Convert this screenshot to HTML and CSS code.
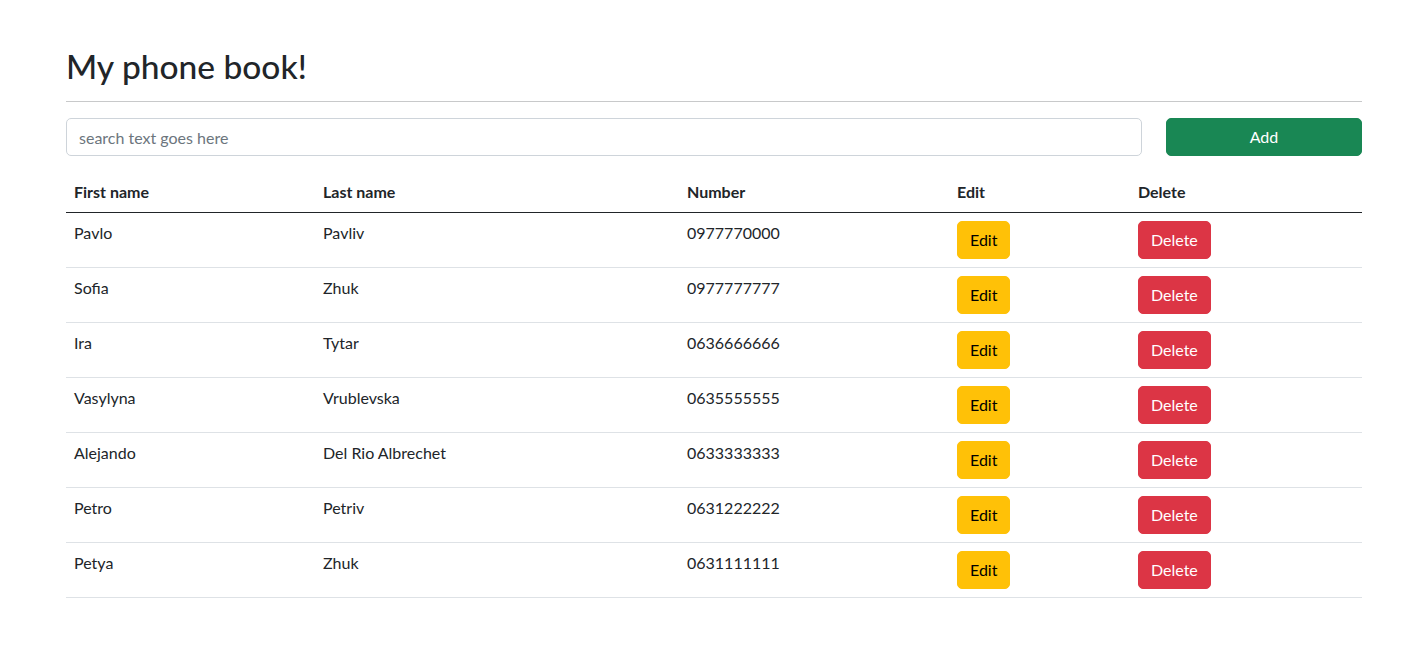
FILE: index.html
```html
<!DOCTYPE html>
<html lang="en">
<head>
<meta charset="utf-8">
<title>My phone book!</title>
<link rel="stylesheet" href="styles.css">
</head>
<body>
<div class="container">
  <h1 class="title">My phone book!</h1>
  <hr class="divider">
  <div class="toolbar">
    <input class="search" type="text" placeholder="search text goes here">
    <button class="btn btn-success add">Add</button>
  </div>
  <table class="table">
    <colgroup>
      <col class="c1"><col class="c2"><col class="c3"><col class="c4"><col class="c5">
    </colgroup>
    <thead>
      <tr><th>First name</th><th>Last name</th><th>Number</th><th>Edit</th><th>Delete</th></tr>
    </thead>
    <tbody>
      <tr><td>Pavlo</td><td>Pavliv</td><td>0977770000</td><td><button class="btn btn-warning">Edit</button></td><td><button class="btn btn-danger">Delete</button></td></tr>
      <tr><td>Sofia</td><td>Zhuk</td><td>0977777777</td><td><button class="btn btn-warning">Edit</button></td><td><button class="btn btn-danger">Delete</button></td></tr>
      <tr><td>Ira</td><td>Tytar</td><td>0636666666</td><td><button class="btn btn-warning">Edit</button></td><td><button class="btn btn-danger">Delete</button></td></tr>
      <tr><td>Vasylyna</td><td>Vrublevska</td><td>0635555555</td><td><button class="btn btn-warning">Edit</button></td><td><button class="btn btn-danger">Delete</button></td></tr>
      <tr><td>Alejando</td><td>Del Rio Albrechet</td><td>0633333333</td><td><button class="btn btn-warning">Edit</button></td><td><button class="btn btn-danger">Delete</button></td></tr>
      <tr><td>Petro</td><td>Petriv</td><td>0631222222</td><td><button class="btn btn-warning">Edit</button></td><td><button class="btn btn-danger">Delete</button></td></tr>
      <tr><td>Petya</td><td>Zhuk</td><td>0631111111</td><td><button class="btn btn-warning">Edit</button></td><td><button class="btn btn-danger">Delete</button></td></tr>
    </tbody>
  </table>
</div>
</body>
</html>
```
FILE: styles.css
```css
* { box-sizing: border-box; }
html, body { margin: 0; padding: 0; background: #fff; }
body {
  font-family: "Lato", "Noto Sans", "Liberation Sans", sans-serif;
  font-size: 16px;
  line-height: 24px;
  color: #212529;
}
.container {
  width: 1296px;
  margin-left: 66px;
  padding-top: 47px;
}
.title {
  margin: 0 0 8px;
  font-size: 33.5px;
  line-height: 38px;
  font-weight: 500;
}
.divider {
  margin: 16px 0;
  border: 0;
  border-top: 1px solid #c8c9ca;
  height: 0;
}
.toolbar {
  display: flex;
  gap: 24px;
}
.search {
  flex: 0 0 1076px;
  height: 38px;
  padding: 6px 12px;
  font: inherit;
  color: #212529;
  border: 1px solid #ced4da;
  border-radius: 5px;
  background: #fff;
}
.search::placeholder { color: #6c757d; opacity: 1; }
.btn {
  display: inline-block;
  height: 38px;
  padding: 6px 12px;
  font: inherit;
  border: 1px solid transparent;
  border-radius: 5px;
  cursor: pointer;
}
.add { flex: 1 1 auto; }
.btn-success { background: #198754; border-color: #198754; color: #fff; }
.btn-warning { background: #ffc107; border-color: #ffc107; color: #000; }
.btn-danger { background: #dc3545; border-color: #dc3545; color: #fff; }
.table {
  width: 100%;
  margin-top: 16px;
  border-collapse: collapse;
  table-layout: fixed;
}
.c1 { width: 249px; }
.c2 { width: 364px; }
.c3 { width: 270px; }
.c4 { width: 181px; }
.c5 { width: 232px; }
.table th, .table td {
  padding: 8px;
  text-align: left;
  vertical-align: top;
  border-bottom: 1px solid #dee2e6;
}
.table th {
  font-weight: 700;
  border-bottom: 1px solid #212529;
}
```
